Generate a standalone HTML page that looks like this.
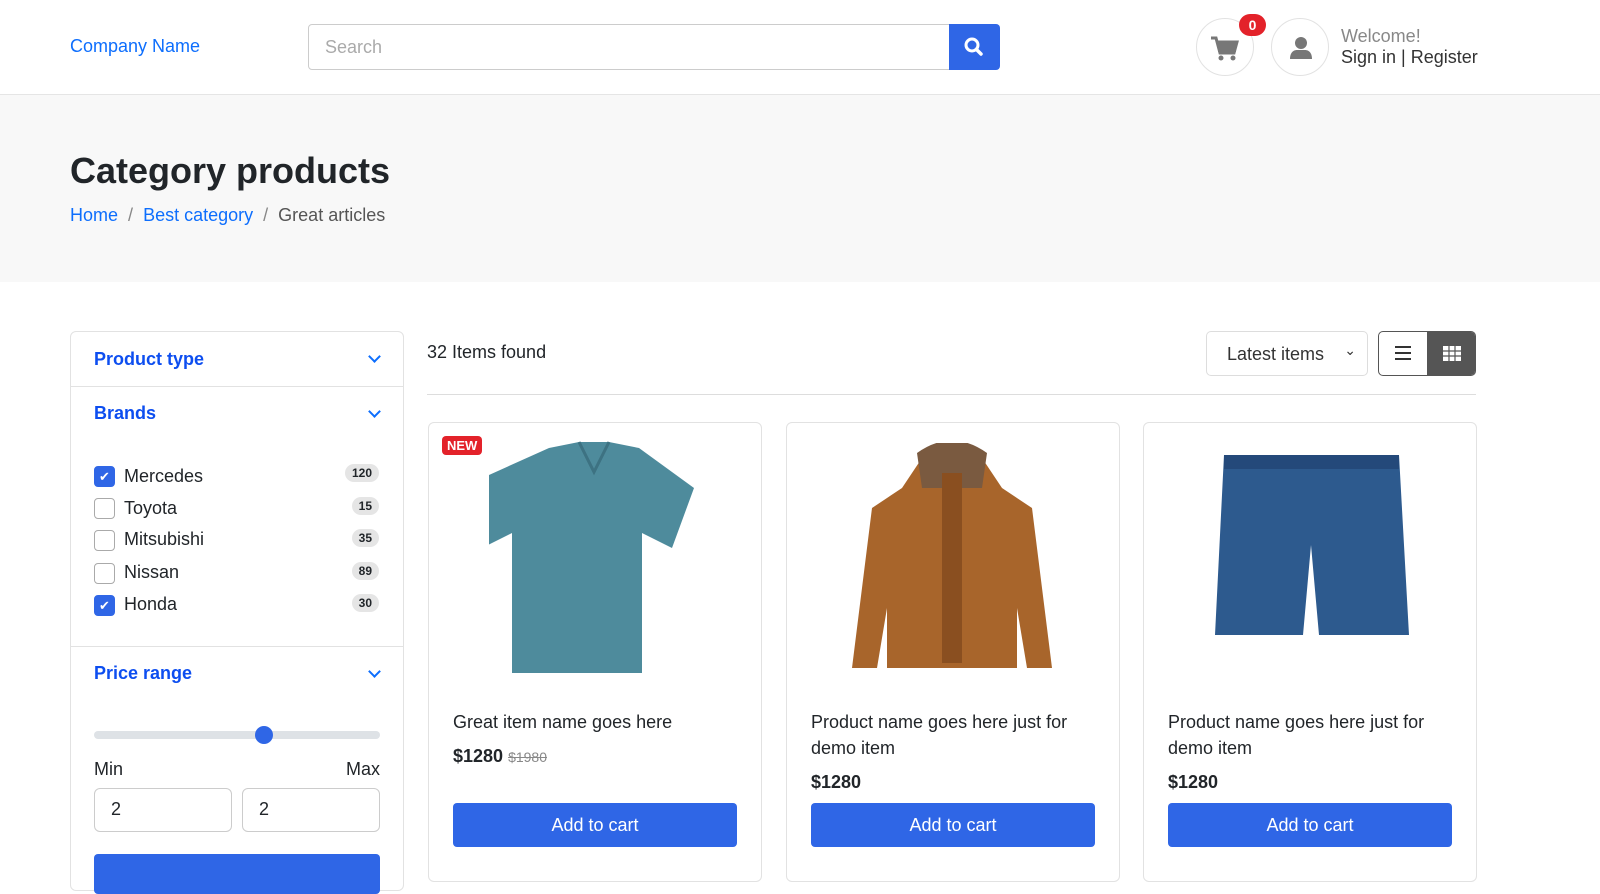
<!DOCTYPE html>
<html><head><meta charset="utf-8"><style>
*{box-sizing:border-box;margin:0;padding:0}
body{width:1600px;height:876px;overflow:hidden;font-family:"Liberation Sans",Arial,sans-serif;color:#212529;background:#fff;position:relative}
.abs{position:absolute}
a{color:#0d6efd;text-decoration:none}
.hdr{height:95px;border-bottom:1px solid #e5e5e5}
.hero{top:95px;left:0;width:1600px;height:187px;background:#f8f8f8}
.circle{width:58px;height:58px;border:1px solid #e2e2e2;border-radius:50%;background:#fff}
.side{left:70px;top:331px;width:334px;height:560px;border:1px solid #e2e2e2;border-radius:6px}
.sh{color:#0d4ef0;font-weight:bold;font-size:18px}
.chev{width:9px;height:9px;border-right:2px solid #0d6efd;border-bottom:2px solid #0d6efd;transform:rotate(45deg)}
.cb{width:21px;height:21px;border:1px solid #aaa;border-radius:4px;background:#fff}
.cb.on{background:#2f66e6;border-color:#2f66e6;color:#fff;font-size:13px;text-align:center;line-height:19px}
.badge{background:#e5e5e5;border-radius:10px;font-size:12px;font-weight:bold;padding:2px 7px;right:24px}
.lbl{left:53px;font-size:18px}
.card{top:422px;width:334px;height:460px;border:1px solid #e2e2e2;border-radius:6px}
.btn{left:24px;width:284px;height:44px;background:#2f66e6;color:#fff;font-size:18px;text-align:center;line-height:44px;border-radius:4px;top:380px}
.name{left:24px;font-size:18px;line-height:26px;width:290px}
.price{left:24px;font-size:18px;font-weight:bold}
.inp{width:138px;height:44px;border:1px solid #ccc;border-radius:6px;font-size:18px;padding:10px 16px}
</style></head><body>
<div class="hdr"></div>
<div class="abs" style="left:70px;top:36px;font-size:18px;color:#0d6efd">Company Name</div>
<div class="abs" style="left:308px;top:24px;width:643px;height:46px;border:1px solid #ccc;border-radius:4px 0 0 4px;font-size:18px;color:#aaa;padding:12px 16px">Search</div>
<div class="abs" style="left:949px;top:24px;width:51px;height:46px;background:#2f66e6;border-radius:0 4px 4px 0">
<svg width="51" height="46"><circle cx="23" cy="21" r="6" fill="none" stroke="#fff" stroke-width="3"/><line x1="27.5" y1="25.5" x2="32" y2="30" stroke="#fff" stroke-width="3.5" stroke-linecap="round"/></svg></div>
<div class="abs circle" style="left:1196px;top:18px"><svg width="58" height="58"><path d="M14 19h5l4 15h14l3-11H20" fill="none" stroke="#777" stroke-width="3"/><rect x="21" y="22" width="18" height="11" fill="#777"/><circle cx="24" cy="39" r="2.5" fill="#777"/><circle cx="36" cy="39" r="2.5" fill="#777"/></svg></div>
<div class="abs" style="left:1239px;top:14px;width:27px;height:22px;background:#e3222a;border-radius:11px;color:#fff;font-weight:bold;font-size:14px;text-align:center;line-height:22px">0</div>
<div class="abs circle" style="left:1271px;top:18px"><svg width="58" height="58"><circle cx="29" cy="24" r="6" fill="#777"/><path d="M18 40c0-7 4-9 7-9h8c3 0 7 2 7 9z" fill="#777"/></svg></div>
<div class="abs" style="left:1341px;top:26px;font-size:18px;color:#888">Welcome!</div>
<div class="abs" style="left:1341px;top:47px;font-size:18px;color:#333">Sign in | Register</div>
<div class="abs hero"></div>
<div class="abs" style="left:70px;top:150px;font-size:36px;font-weight:bold">Category products</div>
<div class="abs" style="left:70px;top:205px;font-size:18px"><a>Home</a> <span style="color:#888">&nbsp;/&nbsp;</span> <a>Best category</a> <span style="color:#888">&nbsp;/&nbsp;</span> <span style="color:#555">Great articles</span></div>

<div class="abs side">
<div class="abs sh" style="left:23px;top:17px">Product type</div><div class="abs chev" style="left:299px;top:20px"></div>
<div class="abs" style="left:0;top:54px;width:332px;border-top:1px solid #e2e2e2"></div>
<div class="abs sh" style="left:23px;top:71px">Brands</div><div class="abs chev" style="left:299px;top:75px"></div>
<div class="abs cb on" style="left:23px;top:134px">✔</div><div class="abs lbl" style="top:134px">Mercedes</div><div class="abs badge" style="top:132px">120</div>
<div class="abs cb" style="left:23px;top:166px"></div><div class="abs lbl" style="top:166px">Toyota</div><div class="abs badge" style="top:165px">15</div>
<div class="abs cb" style="left:23px;top:198px"></div><div class="abs lbl" style="top:197px">Mitsubishi</div><div class="abs badge" style="top:197px">35</div>
<div class="abs cb" style="left:23px;top:231px"></div><div class="abs lbl" style="top:230px">Nissan</div><div class="abs badge" style="top:230px">89</div>
<div class="abs cb on" style="left:23px;top:263px">✔</div><div class="abs lbl" style="top:262px">Honda</div><div class="abs badge" style="top:262px">30</div>
<div class="abs" style="left:0;top:314px;width:332px;border-top:1px solid #e2e2e2"></div>
<div class="abs sh" style="left:23px;top:331px">Price range</div><div class="abs chev" style="left:299px;top:335px"></div>
<div class="abs" style="left:23px;top:399px;width:286px;height:8px;background:#dee2e6;border-radius:4px"></div>
<div class="abs" style="left:184px;top:394px;width:18px;height:18px;background:#2f66e6;border-radius:50%"></div>
<div class="abs" style="left:23px;top:427px;font-size:18px">Min</div><div class="abs" style="left:275px;top:427px;font-size:18px">Max</div>
<div class="abs inp" style="left:23px;top:456px">2</div><div class="abs inp" style="left:171px;top:456px">2</div>
<div class="abs" style="left:23px;top:522px;width:286px;height:40px;background:#2f66e6;border-radius:4px"></div>
</div>

<div class="abs" style="left:427px;top:342px;font-size:18px">32 Items found</div>
<div class="abs" style="left:1206px;top:331px;width:162px;height:45px;border:1px solid #ddd;border-radius:5px;font-size:18px;padding:12px 20px;color:#333">Latest items<span style="position:absolute;right:11px;top:10px;font-size:14px">⌄</span></div>
<div class="abs" style="left:1378px;top:331px;width:98px;height:45px;border:1px solid #555;border-radius:5px;overflow:hidden">
<div class="abs" style="left:16px;top:14px;width:16px;height:2px;background:#333;box-shadow:0 6px #333,0 12px #333"></div>
<div class="abs" style="left:48px;top:0;width:50px;height:45px;background:#555"><svg width="50" height="45"><g fill="#fff"><rect x="16" y="14" width="18" height="15"/></g><g stroke="#555" stroke-width="1.2"><line x1="22" y1="14" x2="22" y2="29"/><line x1="28" y1="14" x2="28" y2="29"/><line x1="16" y1="19" x2="34" y2="19"/><line x1="16" y1="24" x2="34" y2="24"/></g></svg></div></div>
<div class="abs" style="left:427px;top:394px;width:1049px;border-top:1px solid #ddd"></div>

<div class="abs card" style="left:428px">
<div class="abs" style="left:13px;top:13px;background:#e3222a;color:#fff;font-size:13px;font-weight:bold;padding:2px 5px;border-radius:4px">NEW</div>
<svg class="abs" style="left:60px;top:15px" width="210" height="235"><path d="M60 10l30-6 30 0 30 6 55 40-22 60-30-15 0 140-130 0 0-140-30 15-22-60z" fill="#4e8b9c"/><path d="M90 4l15 30 15-30" fill="none" stroke="#3d7282" stroke-width="3"/></svg>
<div class="abs name" style="top:286px">Great item name goes here</div>
<div class="abs price" style="top:323px">$1280 <span style="font-weight:normal;font-size:14px;color:#888;text-decoration:line-through">$1980</span></div>
<div class="abs btn">Add to cart</div></div>

<div class="abs card" style="left:786px">
<svg class="abs" style="left:60px;top:20px" width="210" height="225"><path d="M75 15q30-20 60 0l20 30 30 20 20 160-25 0-10-60 0 70-130 0 0-70-10 60-25 0 20-160 30-20z" fill="#a8652b"/><path d="M70 10q35-25 70 0l-5 35-60 0z" fill="#7a5a40"/><rect x="95" y="30" width="20" height="190" fill="#8a4f20"/></svg>
<div class="abs name" style="top:286px">Product name goes here just for demo item</div>
<div class="abs price" style="top:349px">$1280</div>
<div class="abs btn">Add to cart</div></div>

<div class="abs card" style="left:1143px">
<svg class="abs" style="left:65px;top:30px" width="200" height="205"><path d="M15 2l175 0 10 180-90 0-8-90-8 90-88 0z" fill="#2d5a8e"/><rect x="15" y="2" width="175" height="14" fill="#24497a"/></svg>
<div class="abs name" style="top:286px">Product name goes here just for demo item</div>
<div class="abs price" style="top:349px">$1280</div>
<div class="abs btn">Add to cart</div></div>
</body></html>
